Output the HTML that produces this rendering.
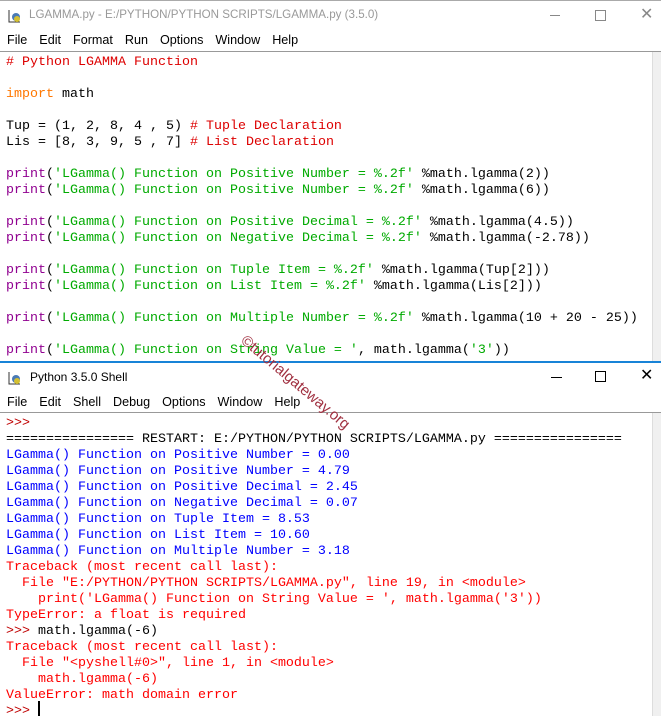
<!DOCTYPE html>
<html><head><meta charset="utf-8"><style>
body{margin:0;width:661px;height:716px;position:relative;overflow:hidden;background:#fff;font-family:"Liberation Sans",sans-serif}
.ab{position:absolute}
.code{position:absolute;left:6px;font-family:"Liberation Mono",monospace;font-size:13.33px;line-height:16px;white-space:pre;margin:0}
.k{color:#ff7700}.s{color:#00aa00}.c{color:#dd0000}.b{color:#900090}.o{color:#0000ff}.e{color:#ff0000}.p{color:#c00000}
.title{font-size:11.6px;color:#999}
.menu{font-size:12.6px;color:#000;word-spacing:0}
.menu span{margin-right:12px}
</style></head><body>
<div class="ab" style="left:0;top:0;width:661px;height:1px;background:#aaa"></div>
<svg class="ab" style="left:7px;top:8px" width="16" height="16"><path d="M2 2v12h11" stroke="#333" fill="none"/><circle cx="9" cy="9" r="4" fill="#4a7ab5"/><circle cx="10" cy="11" r="3" fill="#d4c032"/></svg>
<div class="ab title" style="left:29px;top:8px">LGAMMA.py - E:/PYTHON/PYTHON SCRIPTS/LGAMMA.py (3.5.0)</div>
<div class="ab" style="left:550px;top:15px;width:10px;height:1px;background:#888"></div>
<div class="ab" style="left:595px;top:10px;width:9px;height:9px;border:1px solid #888"></div>
<div class="ab" style="left:640px;top:4px;font-size:16px;color:#888">✕</div>
<div class="ab menu" style="left:7px;top:33px"><span>File</span><span>Edit</span><span>Format</span><span>Run</span><span>Options</span><span>Window</span><span>Help</span></div>
<div class="ab" style="left:0;top:51px;width:661px;height:1px;background:#999"></div>
<div class="ab" style="left:652px;top:52px;width:9px;height:310px;background:#f0f0f0;border-left:1px solid #ddd"></div>
<pre class="code" style="top:55px"><span class="c"># Python LGAMMA Function</span>

<span class="k">import</span> math

Tup = (1, 2, 8, 4 , 5) <span class="c"># Tuple Declaration</span>
Lis = [8, 3, 9, 5 , 7] <span class="c"># List Declaration</span>

<span class="b">print</span>(<span class="s">'LGamma() Function on Positive Number = %.2f'</span> %math.lgamma(2))
<span class="b">print</span>(<span class="s">'LGamma() Function on Positive Number = %.2f'</span> %math.lgamma(6))

<span class="b">print</span>(<span class="s">'LGamma() Function on Positive Decimal = %.2f'</span> %math.lgamma(4.5))
<span class="b">print</span>(<span class="s">'LGamma() Function on Negative Decimal = %.2f'</span> %math.lgamma(-2.78))

<span class="b">print</span>(<span class="s">'LGamma() Function on Tuple Item = %.2f'</span> %math.lgamma(Tup[2]))
<span class="b">print</span>(<span class="s">'LGamma() Function on List Item = %.2f'</span> %math.lgamma(Lis[2]))

<span class="b">print</span>(<span class="s">'LGamma() Function on Multiple Number = %.2f'</span> %math.lgamma(10 + 20 - 25))

<span class="b">print</span>(<span class="s">'LGamma() Function on String Value = '</span>, math.lgamma(<span class="s">'3'</span>))</pre>
<div class="ab" style="left:0;top:361px;width:661px;height:355px;background:#fff;border-top:2px solid #1883d7"></div>
<svg class="ab" style="left:7px;top:370px" width="16" height="16"><path d="M2 2v12h11" stroke="#333" fill="none"/><circle cx="9" cy="9" r="4" fill="#4a7ab5"/><circle cx="10" cy="11" r="3" fill="#d4c032"/></svg>
<div class="ab" style="left:30px;top:370px;font-size:12px;color:#000">Python 3.5.0 Shell</div>
<div class="ab" style="left:551px;top:377px;width:11px;height:1px;background:#000"></div>
<div class="ab" style="left:595px;top:371px;width:9px;height:9px;border:1px solid #000"></div>
<div class="ab" style="left:640px;top:365px;font-size:16px;color:#000">✕</div>
<div class="ab menu" style="left:7px;top:395px"><span>File</span><span>Edit</span><span>Shell</span><span>Debug</span><span>Options</span><span>Window</span><span>Help</span></div>
<div class="ab" style="left:0;top:412px;width:661px;height:1px;background:#999"></div>
<div class="ab" style="left:652px;top:413px;width:9px;height:303px;background:#f0f0f0;border-left:1px solid #ddd"></div>
<pre class="code" style="top:416px"><span class="p">&gt;&gt;&gt;</span>
================ RESTART: E:/PYTHON/PYTHON SCRIPTS/LGAMMA.py ================
<span class="o">LGamma() Function on Positive Number = 0.00
LGamma() Function on Positive Number = 4.79
LGamma() Function on Positive Decimal = 2.45
LGamma() Function on Negative Decimal = 0.07
LGamma() Function on Tuple Item = 8.53
LGamma() Function on List Item = 10.60
LGamma() Function on Multiple Number = 3.18</span>
<span class="e">Traceback (most recent call last):
  File "E:/PYTHON/PYTHON SCRIPTS/LGAMMA.py", line 19, in &lt;module&gt;
    print('LGamma() Function on String Value = ', math.lgamma('3'))
TypeError: a float is required</span>
<span class="p">&gt;&gt;&gt;</span> math.lgamma(-6)
<span class="e">Traceback (most recent call last):
  File "&lt;pyshell#0&gt;", line 1, in &lt;module&gt;
    math.lgamma(-6)
ValueError: math domain error</span>
<span class="p">&gt;&gt;&gt;</span> </pre>
<div class="ab" style="left:38px;top:701px;width:2px;height:15px;background:#000"></div>
<div class="ab" style="left:243px;top:330px;transform:rotate(40deg);transform-origin:0 50%;font-size:15px;color:#a03040;white-space:nowrap">©tutorialgateway.org</div>
</body></html>
